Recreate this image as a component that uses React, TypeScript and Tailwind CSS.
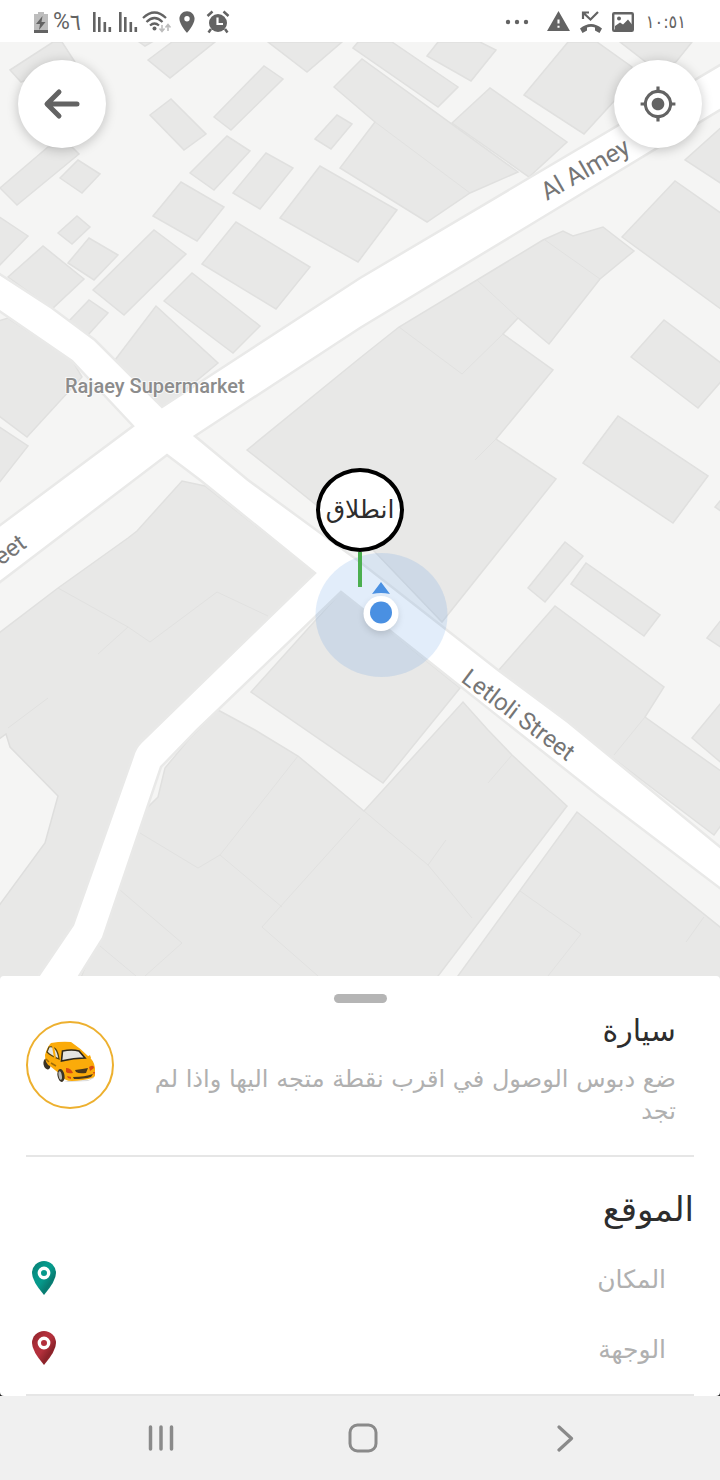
import React from "react";
import { MdMyLocation, MdWarning, MdLocationOn } from "react-icons/md";

const buildings: string[] = [
  "10,70 53,42 62,42 75,62 21,82",
  "139,42 145,46 152,42",
  "148,60 172,42 215,42 170,78",
  "214,117 264,66 283,79 231,130",
  "150,115 171,99 206,134 184,150",
  "190,173 227,136 250,151 214,190",
  "233,193 266,153 293,168 260,209",
  "315,139 337,115 352,124 331,149",
  "268,42 342,42 307,72",
  "353,48 358,42 392,42 458,87 438,107",
  "452,123 490,88 567,142 529,177",
  "334,87 362,59 518,172 470,193 427,222 340,168 375,122",
  "427,56 438,42 480,42 496,50 471,81",
  "524,95 568,42 597,42 632,67 615,100 584,134",
  "620,42 692,42 676,62 656,70",
  "725,124 685,160 725,186",
  "622,237 675,181 725,216 725,312",
  "247,450 360,358 399,327 477,280 543,240 563,231 573,236 603,227 634,251 600,279 549,344 518,318 503,334 553,370 496,439 556,479 442,622 375,552 285,480",
  "631,357 664,320 725,366 725,377 698,408",
  "583,463 618,416 708,476 673,523",
  "528,588 565,542 583,556 545,602",
  "571,584 586,563 660,615 644,636",
  "498,671 555,606 664,687 645,717 725,774 725,820 714,835",
  "707,638 725,615 725,650",
  "715,507 725,495 725,514",
  "692,738 725,698 725,766",
  "0,188 48,147 72,147 79,154 17,205",
  "60,178 78,160 100,174 82,193",
  "153,216 181,182 224,207 197,241",
  "280,218 320,166 397,210 358,262",
  "58,233 77,216 90,227 72,244",
  "-5,214 28,236 -5,270",
  "8,277 43,246 84,279 52,309",
  "68,263 89,238 118,255 94,280",
  "93,290 154,230 186,254 124,315",
  "164,301 192,273 260,326 233,353",
  "202,264 236,222 310,267 276,309",
  "69,321 89,300 108,313 88,335",
  "115,360 156,306 218,363 200,378 161,410",
  "-5,322 8,318 72,360 82,377 27,437 -5,413",
  "-5,424 28,446 -5,488",
  "-5,636 58,588 128,538 137,531 182,481 205,486 318,575 137,750 76,928 40,980 -5,980",
  "218,710 255,730 298,756 364,811 463,702 488,730 512,755 567,806 435,980 80,980 100,930 147,808 158,797 165,768 190,738",
  "577,812 725,931 725,980 455,980",
  "251,692 341,592 460,688 383,783",
];

const parcelLines: string[] = [
  "375,122 470,193",
  "399,327 462,374 503,334",
  "477,280 518,318",
  "545,240 600,279",
  "496,439 475,460",
  "58,588 128,627 98,654",
  "128,627 150,642 217,592 268,616",
  "8,728 48,698",
  "140,833 198,868 220,855 282,907",
  "298,756 220,855",
  "120,890 182,943 145,976",
  "100,946 136,976",
  "364,811 428,865 472,918",
  "428,865 446,840",
  "360,818 262,927 318,976",
  "512,755 488,783",
  "520,891 581,934 548,976",
  "704,917 686,942",
  "645,717 614,755",
];

const roadNetwork =
  "M-5 271L52 308L95 340L162 407L360 278L725 62V107L360 328L195 436L248 480L360 562L498 670L568 722L725 851V892L600 797L427 660L341 592L197 730L161 767L103 938L76 981H35L73 925L133 756Q135 748 141 742L315 573L200 480L167 455L-5 586V529L133 426L72 361L-5 308Z";

function StreetMap() {
  return (
    <svg
      className="absolute inset-0 h-full w-full"
      viewBox="0 42 720 934"
      preserveAspectRatio="xMidYMid slice"
      role="img"
      aria-label="Street map"
    >
      <rect x="0" y="42" width="720" height="934" fill="#f5f5f4" />
      <g fill="#e8e8e7" stroke="#e0e0df" strokeWidth="1.500">
        {buildings.map((p) => (
          <polygon key={p} points={p} />
        ))}
      </g>
      <polygon
        points="-5,742 6,734 10,747 58,796 45,843 -5,911"
        fill="#f5f5f4"
        stroke="#dededd"
        strokeWidth="1.500"
      />
      <g fill="none" stroke="#e1e1e0" strokeWidth="1">
        {parcelLines.map((p) => (
          <polyline key={p} points={p} />
        ))}
      </g>
      <path d={roadNetwork} fill="#fff" stroke="#e9e9e8" strokeWidth="2.500" />
      <ellipse cx="381.500" cy="615" rx="66" ry="62" fill="#4a90e2" fillOpacity="0.16" />
      <g fill="#757575" fontFamily="Roboto, sans-serif" fontSize="25">
        <text transform="translate(547 201) rotate(-30)">Al Almey</text>
        <text fontSize="24" transform="translate(460 681) rotate(37)">Letloli Street</text>
        <text fontSize="24" transform="translate(1 566) rotate(-36)">eet</text>
      </g>
      <text
        x="65"
        y="393"
        fill="#8c8c8c"
        stroke="#fff"
        strokeWidth="2"
        strokeOpacity="0.7"
        paintOrder="stroke"
        fontFamily="Roboto, sans-serif"
        fontSize="20"
        fontWeight="500"
      >
        Rajaey Supermarket
      </text>
      <path d="M381 582l9 12q-9 -2 -18 0z" fill="#4a90e2" />
      <g className="drop-shadow-md">
        <circle cx="381" cy="613.500" r="17.500" fill="#fff" />
      </g>
      <circle cx="381" cy="612.500" r="11" fill="#4a90e2" />
    </svg>
  );
}

function SignalIcon() {
  return (
    <svg width="20" height="22" viewBox="0 0 20 22" fill="#636363" aria-hidden="true">
      <rect x="1" y="1" width="2.600" height="20" />
      <rect x="6" y="6" width="2.600" height="15" />
      <rect x="11.500" y="11" width="2.600" height="10" />
      <rect x="16.500" y="16" width="2.600" height="5" />
    </svg>
  );
}

function StatusBar() {
  return (
    <header className="flex h-[42px] shrink-0 items-center justify-between bg-white pr-[34px] pl-8 pt-px text-[#636363]">
      <div className="flex items-center">
        <svg width="18" height="24" viewBox="0 0 18 24" aria-hidden="true">
          <path d="M6 2h6v2h4v19H2V4h4z" fill="#bdbdbd" />
          <path d="M2 20h14v3H2z" fill="#636363" />
          <path d="M10.500 6L4 14h4l-1 6 6.500-8h-4z" fill="#636363" />
        </svg>
        <span dir="ltr" className="ml-[3px] flex w-[35px] font-['Roboto','DejaVu_Sans',sans-serif] text-[23px] leading-6">
          <span>%</span>
          <span className="font-['DejaVu_Sans_Condensed','DejaVu_Sans',sans-serif]">٦</span>
        </span>
        <span className="ml-1 flex gap-[6px]">
          <SignalIcon />
          <SignalIcon />
        </span>
        <svg className="ml-1" width="30" height="24" viewBox="0 0 30 24" fill="none" aria-hidden="true">
          <g stroke="#636363" strokeWidth="2.200">
            <path d="M1 8Q12.500 -3 24 8" />
            <path d="M4.500 12Q12.500 4 20.500 12" />
            <path d="M8 15.500Q12.500 11.500 17 15.500" />
          </g>
          <circle cx="12.500" cy="18.500" r="2" fill="#636363" />
          <path d="M20 15v6M17.500 18.500L20 21.500l2.500-3M26 21v-6M23.500 17.500L26 14.500l2.500 3" stroke="#bdbdbd" strokeWidth="1.600" />
        </svg>
        <MdLocationOn className="ml-[2px]" size={26} />
        <svg className="ml-[6px]" width="24" height="24" viewBox="0 0 24 24" aria-hidden="true">
          <circle cx="12" cy="13" r="9" fill="#636363" />
          <path d="M1.500 6L6.500 1.500M22.500 6L17.500 1.500M5 19l-2.500 3.500M19 19l2.500 3.500" stroke="#636363" strokeWidth="2.500" />
          <path d="M11.500 7.500V14H17" fill="none" stroke="#fff" strokeWidth="2.200" />
        </svg>
      </div>
      <div className="flex items-center">
        <svg width="24" height="6" viewBox="0 0 24 6" fill="#636363" aria-hidden="true">
          <circle cx="3" cy="3" r="2.200" />
          <circle cx="12" cy="3" r="2.200" />
          <circle cx="21" cy="3" r="2.200" />
        </svg>
        <MdWarning className="ml-[17px]" size={25} />
        <svg className="ml-2" width="24" height="24" viewBox="0 0 24 24" aria-hidden="true">
          <path d="M4 9V2.500h6M4.500 3l7 6.500L19 2" fill="none" stroke="#636363" strokeWidth="2.200" />
          <path d="M1 18.500Q12 9.500 23 18.500L20.500 23 16 20.500V17.500Q12 16 8 17.500V20.500L3.500 23Z" fill="#636363" />
        </svg>
        <svg className="ml-[9px]" width="22" height="20" viewBox="0 0 22 20" aria-hidden="true">
          <rect x="1.200" y="1.200" width="19.600" height="17.600" rx="1" fill="none" stroke="#636363" strokeWidth="2.400" />
          <circle cx="7" cy="6.500" r="2" fill="#636363" />
          <path d="M3 14l5-3.500 3 2 5-5 4 5v6H3z" fill="#636363" />
        </svg>
        <time dir="ltr" className="ml-3 font-['DejaVu_Sans_Condensed','DejaVu_Sans',sans-serif] text-lg leading-6">
          ١٠:٥١
        </time>
      </div>
    </header>
  );
}

function RoundButton({ label, className, children }: { label: string; className: string; children: React.ReactNode }) {
  return (
    <button
      type="button"
      aria-label={label}
      className={`absolute top-[18px] flex size-[88px] items-center justify-center rounded-full bg-white text-[#636363] shadow-[0_2px_12px_rgba(0,0,0,0.22)] ${className}`}
    >
      {children}
    </button>
  );
}

function Taxi() {
  return (
    <svg width="56" height="44" viewBox="0 0 56 44" aria-hidden="true">
      <path d="M22 40l25-1 5-5v3l-6 3-20 1z" fill="#d9d9d9" />
      <ellipse cx="5" cy="23" rx="3.500" ry="5.500" fill="#3b3326" transform="rotate(-12 5 23)" />
      <path
        d="M3 14Q5 6 9 2Q20 0 29 1Q38 7 46 15Q52 19 53 27L53 35Q50 39 30 40Q22 40 19 34L8 25Q3 23 3 14Z"
        fill="#fbab0a"
      />
      <path d="M7 6Q15 4 17 18Q9 15 5 11Z" fill="#e4e4e2" stroke="#51400f" strokeWidth="1.200" />
      <path d="M11 5l2 12" stroke="#fbab0a" strokeWidth="2" />
      <path d="M20.500 10Q30 8 37 10L43 17Q32 17 19.500 20Z" fill="#e4e4e2" stroke="#2e281c" strokeWidth="1.600" />
      <path d="M45 16l3-2 1 3-3 1z" fill="#fbab0a" />
      <path d="M4 18l3 3M9 22l5 3" stroke="#a06c08" strokeWidth="1.500" />
      <ellipse cx="19" cy="34.500" rx="3.500" ry="6.500" fill="#3b3326" transform="rotate(-10 19 34.500)" />
      <ellipse cx="18.200" cy="34.500" rx="1.600" ry="4.300" fill="#b9b9b5" transform="rotate(-10 18.200 34.500)" />
      <path d="M24 27Q29 27 31 32Q26 33 24 31ZM47 26Q52 23 52 27L48 30Z" fill="#d84a12" />
      <path d="M33 29Q41 28 46 27L44 32Q37 33 34 31Z" fill="#4a371a" />
      <path d="M31 36Q43 36 51 33L49 36Q42 38 32 38Z" fill="#4a371a" />
      <path d="M25 35l4 1v2l-3-1zM51 31l2 0-1 3z" fill="#d84a12" />
    </svg>
  );
}

function PlacePin({ id, light, dark }: { id: string; light: string; dark: string }) {
  return (
    <svg className="shrink-0" width="24" height="34" viewBox="0 0 24 34" aria-hidden="true">
      <defs>
        <linearGradient id={id} x1="0" y1="0" x2="1" y2="1">
          <stop offset="0" stopColor={dark} />
          <stop offset="0.350" stopColor={light} />
          <stop offset="0.500" stopColor={light} />
          <stop offset="0.700" stopColor={dark} />
          <stop offset="1" stopColor={light} />
        </linearGradient>
      </defs>
      <path d="M12 0A12 12 0 0 1 24 12Q24 20 12 34Q0 20 0 12A12 12 0 0 1 12 0Z" fill={`url(#${id})`} />
      <circle cx="12" cy="12" r="4.700" fill={light} stroke="#fff" strokeWidth="3.400" />
    </svg>
  );
}

function PlaceField({ label, pin }: { label: string; pin: React.ReactNode }) {
  return (
    <label className="flex h-[70px] items-center justify-between pr-7 pl-[6px]">
      {pin}
      <input
        type="text"
        dir="rtl"
        aria-label={label}
        placeholder={label}
        className="min-w-0 flex-1 bg-transparent pt-1 text-[25px] text-[#b0b0b0] outline-none placeholder:text-[#b0b0b0]"
      />
    </label>
  );
}

export default function App() {
  return (
    <div className="flex min-h-screen flex-col bg-white font-['DejaVu_Sans',sans-serif]">
      <StatusBar />
      <main className="flex flex-1 flex-col">
        <section className="relative min-h-96 flex-1 overflow-hidden">
          <StreetMap />
          <RoundButton label="رجوع" className="left-[18px]">
            <svg width="38" height="32" viewBox="0 0 38 32" fill="none" aria-hidden="true">
              <path d="M16 4L4 16l12 12M5 16h29" stroke="#636363" strokeWidth="5" strokeLinecap="round" strokeLinejoin="round" />
            </svg>
          </RoundButton>
          <RoundButton label="موقعي" className="right-[18px]">
            <MdMyLocation size={38} />
          </RoundButton>
          <div className="absolute top-1/2 left-1/2 -mt-[41px] flex -translate-x-1/2 flex-col items-center">
            <button
              type="button"
              dir="rtl"
              className="flex h-[84px] w-[88px] items-center justify-center rounded-[50%] border-4 border-black bg-white text-[25px] whitespace-nowrap text-[#2d2d2d]"
            >
              انطلاق
            </button>
            <span className="h-[35px] w-1 bg-[#4caf50]" />
          </div>
        </section>

        <div className="bg-linear-to-b from-[#e8e8e7] from-50% to-[#222] to-50%">
          <section className="rounded bg-white px-[26px] pt-[18px]">
            <div className="mx-auto h-[9px] w-[53px] rounded-full bg-[#b5b5b5]" />
            <div className="flex gap-5 border-b-2 border-[#e6e6e6] pt-[10px] pr-[18px] pb-7">
              <div className="mt-2 flex size-[88px] shrink-0 items-center justify-center rounded-full border-2 border-[#edb02f] pb-1">
                <Taxi />
              </div>
              <div dir="rtl" className="flex-1">
                <h1 className="text-[30px] leading-9 text-[#2d2d2d]">سيارة</h1>
                <p className="mt-[14px] text-2xl leading-8 text-[#b0b0b0]">
                  ضع دبوس الوصول في اقرب نقطة متجه اليها واذا لم تجد
                </p>
              </div>
            </div>
            <div className="border-b-2 border-[#e6e6e6] pb-[11px]">
              <h2 dir="rtl" className="pt-8 pb-[14px] text-[34px] leading-10 text-[#2d2d2d]">
                الموقع
              </h2>
              <PlaceField label="المكان" pin={<PlacePin id="pin-origin" light="#06998b" dark="#087a70" />} />
              <PlaceField label="الوجهة" pin={<PlacePin id="pin-target" light="#b3303c" dark="#8a2229" />} />
            </div>
          </section>
        </div>
      </main>

      <nav className="flex h-[84px] shrink-0 items-center justify-around bg-[#f0f0f0] pr-[54px] pl-[60px]">
        <button type="button" aria-label="Recent apps" className="p-2">
          <svg width="28" height="28" viewBox="0 0 28 28" fill="none" stroke="#8a8a8a" strokeWidth="3.500" strokeLinecap="round">
            <path d="M3.500 3v22M14 3v22M24.500 3v22" />
          </svg>
        </button>
        <button type="button" aria-label="Home" className="p-2">
          <svg width="30" height="30" viewBox="0 0 30 30" fill="none" stroke="#8a8a8a" strokeWidth="3">
            <rect x="2" y="2" width="26" height="26" rx="7.500" />
          </svg>
        </button>
        <button type="button" aria-label="Back" className="p-2">
          <svg width="28" height="28" viewBox="0 0 28 28" fill="none" stroke="#8a8a8a" strokeWidth="3.200" strokeLinecap="round" strokeLinejoin="round">
            <path d="M8 3l12.500 11.500L8 26" />
          </svg>
        </button>
      </nav>
    </div>
  );
}
